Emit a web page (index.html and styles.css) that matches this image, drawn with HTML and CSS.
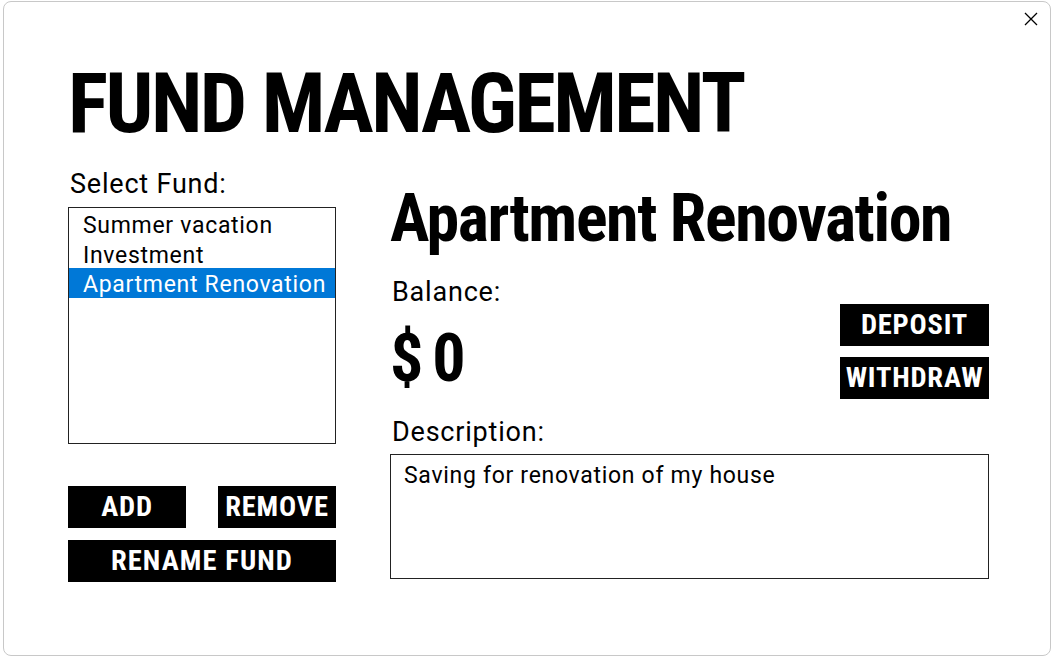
FILE: index.html
```html
<!DOCTYPE html>
<html>
<head>
<meta charset="utf-8">
<link rel="stylesheet" href="styles.css">
</head>
<body>
<div class="window">
  <div class="close">
    <svg width="14" height="14" viewBox="0 0 14 14"><path d="M1 1L13 13M13 1L1 13" stroke="#000" stroke-width="1.3" fill="none"/></svg>
  </div>
  <h1 class="title">FUND MANAGEMENT</h1>
  <div class="main">
    <div class="left">
      <div class="label">Select Fund:</div>
      <div class="list">
        <div class="item">Summer vacation</div>
        <div class="item">Investment</div>
        <div class="item selected">Apartment Renovation</div>
      </div>
      <div class="btnrow">
        <div class="btn small">ADD</div>
        <div class="btn small">REMOVE</div>
      </div>
      <div class="btn wide">RENAME FUND</div>
    </div>
    <div class="right">
      <div class="fundname">Apartment Renovation</div>
      <div class="balrow">
        <div class="balleft">
          <div class="label">Balance:</div>
          <div class="amount">$0</div>
        </div>
        <div class="balbtns">
          <div class="btn act">DEPOSIT</div>
          <div class="btn act">WITHDRAW</div>
        </div>
      </div>
      <div class="label desc-label">Description:</div>
      <div class="desc">Saving for renovation of my house</div>
    </div>
  </div>
</div>
</body>
</html>
```
FILE: styles.css
```css
html, body {
  margin: 0;
  padding: 0;
  background: #fff;
}
body {
  font-family: "Roboto", "Liberation Sans", sans-serif;
  color: #000;
}
.window {
  position: relative;
  box-sizing: border-box;
  margin: 1px 0 0 3px;
  width: 1048px;
  height: 655px;
  border: 1px solid #c8c8c8;
  border-radius: 8px;
  padding: 0 0 0 64px;
}
.close {
  position: absolute;
  top: 10px;
  right: 12px;
  width: 14px;
  height: 14px;
  line-height: 0;
}
.title {
  margin: 60px 0 0 0;
  font-family: "Roboto Condensed", "Roboto", sans-serif;
  font-size: 84px;
  font-weight: 700;
  line-height: 84px;
  letter-spacing: -2.5px;
  height: 84px;
}
.main {
  display: flex;
  gap: 54px;
  margin-top: 22px;
}
.left {
  width: 268px;
  display: flex;
  flex-direction: column;
}
.label {
  font-size: 27px;
  line-height: 32px;
  height: 32px;
  padding-left: 2px;
  letter-spacing: 0.8px;
}
.list {
  margin-top: 7px;
  box-sizing: border-box;
  height: 237px;
  border: 1px solid #222;
  padding-top: 1px;
}
.item {
  box-sizing: border-box;
  font-size: 23px;
  line-height: 26.5px;
  height: 29.5px;
  padding: 4px 0 0 14px;
  letter-spacing: 0.7px;
}
.item.selected {
  background: #0078d7;
  color: #fff;
}
.btn {
  background: #000;
  color: #fff;
  font-family: "Roboto Condensed", "Roboto", sans-serif;
  font-weight: 700;
  font-size: 28.5px;
  height: 42px;
  line-height: 42px;
  text-align: center;
  letter-spacing: 0.8px;
  white-space: nowrap;
}
.btnrow {
  display: flex;
  justify-content: space-between;
  margin-top: 42px;
}
.btn.small {
  width: 118px;
}
.btn.wide {
  margin-top: 12px;
  letter-spacing: 1.1px;
}
.right {
  width: 599px;
  display: flex;
  flex-direction: column;
}
.fundname {
  font-family: "Roboto Condensed", "Roboto", sans-serif;
  font-size: 66px;
  font-weight: 700;
  line-height: 80px;
  height: 80px;
  margin-top: 11px;
  letter-spacing: -1.4px;
  white-space: nowrap;
}
.balrow {
  display: flex;
  justify-content: space-between;
  margin-top: 17px;
}
.amount {
  font-family: "Roboto Condensed", "Roboto", sans-serif;
  font-size: 66px;
  font-weight: 700;
  line-height: 80px;
  height: 80px;
  margin-top: 11px;
  letter-spacing: 9px;
}
.balbtns {
  display: flex;
  flex-direction: column;
  gap: 11px;
  margin-top: 28px;
}
.btn.act {
  width: 149px;
}
.desc-label {
  margin-top: 17px;
}
.desc {
  margin-top: 6px;
  box-sizing: border-box;
  height: 125px;
  border: 1px solid #222;
  font-size: 23px;
  line-height: 30px;
  padding: 6px 0 0 13px;
  letter-spacing: 0.7px;
}
```
